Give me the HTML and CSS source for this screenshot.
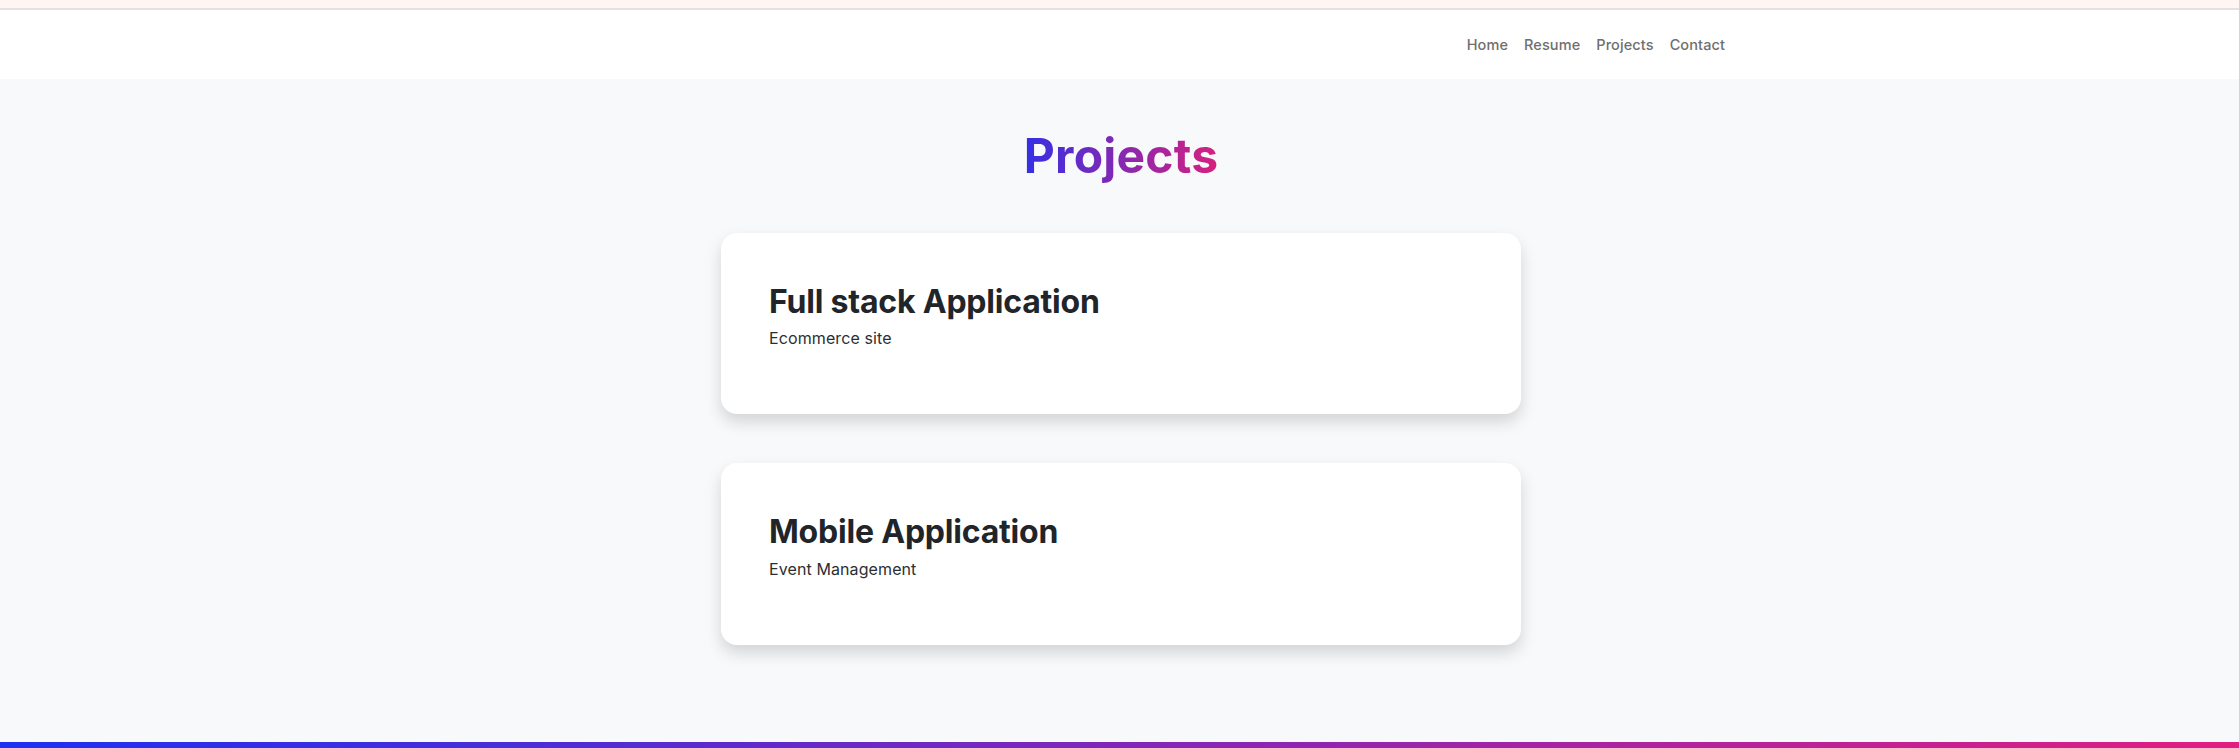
FILE: index.html
```html
<!DOCTYPE html>
<html lang="en">
<head>
<meta charset="utf-8">
<title>Projects</title>
<link rel="stylesheet" href="styles.css">
</head>
<body>
<div class="page">
  <div class="topstrip"></div>
  <header class="navbar">
    <div class="container">
      <ul class="nav">
        <li><a href="#">Home</a></li>
        <li><a href="#">Resume</a></li>
        <li><a href="#">Projects</a></li>
        <li><a href="#">Contact</a></li>
      </ul>
    </div>
  </header>
  <main class="main">
    <h1 class="title"><span class="text-gradient">Projects</span></h1>
    <div class="cards">
      <div class="card">
        <h2 class="card-title">Full stack Application</h2>
        <p class="card-text">Ecommerce site</p>
      </div>
      <div class="card">
        <h2 class="card-title">Mobile Application</h2>
        <p class="card-text">Event Management</p>
      </div>
    </div>
  </main>
  <footer class="footbar"></footer>
</div>
</body>
</html>
```

FILE: styles.css
```css
* { box-sizing: border-box; }
html, body {
  margin: 0;
  padding: 0;
}
body {
  font-family: Inter, "Noto Sans", "Liberation Sans", sans-serif;
  background: #f8f9fa;
  color: #212529;
}
.page {
  display: flex;
  flex-direction: column;
  min-height: 748px;
}
.topstrip {
  height: 10px;
  background: #fff5f3;
  border-bottom: 2px solid #e6e0e0;
}
.navbar {
  background: #fff;
  padding: 16px 0 16px 3px;
}
.container {
  max-width: 1320px;
  margin: 0 auto;
  padding: 0 48px;
  display: flex;
  justify-content: flex-end;
}
.nav {
  list-style: none;
  margin: 0;
  padding: 0;
  display: flex;
}
.nav a {
  display: block;
  padding: 8px 8px;
  font-size: 14.5px;
  line-height: 21px;
  font-weight: 500;
  letter-spacing: 0.1px;
  color: #6f6f6f;
  text-decoration: none;
}
.main {
  flex: 1;
  padding: 48px 0 97px 3px;
  display: flex;
  flex-direction: column;
  align-items: center;
}
.title {
  margin: 0 0 48px;
  font-size: 48px;
  line-height: 1.2;
  font-weight: 700;
  letter-spacing: 0.2px;
}
.text-gradient {
  background: linear-gradient(90deg, #3530e4 0%, #d8207f 100%);
  -webkit-background-clip: text;
  background-clip: text;
  -webkit-text-fill-color: transparent;
  color: transparent;
}
.cards {
  display: flex;
  flex-direction: column;
  gap: 49px;
}
.card {
  width: 800px;
  background: #fff;
  border-radius: 16px;
  box-shadow: 0 8px 16px rgba(0, 0, 0, 0.15);
  padding: 48px 48px 48px;
}
.card-title {
  margin: 0 0 4px;
  font-size: 32px;
  line-height: 41.6px;
  font-weight: 700;
  letter-spacing: -0.2px;
  color: #212529;
}
.card-text {
  margin: 0 0 16px;
  font-size: 16px;
  line-height: 24px;
  letter-spacing: 0.1px;
  color: #2b2f33;
}
.footbar {
  height: 7px;
  background: linear-gradient(90deg, #1e30f3 0%, #e21e80 100%);
}
```
